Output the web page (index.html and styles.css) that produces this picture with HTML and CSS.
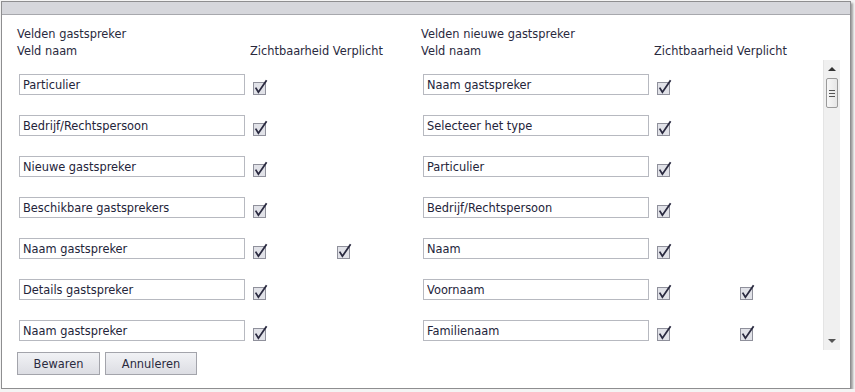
FILE: index.html
```html
<!DOCTYPE html>
<html lang="nl">
<head>
<meta charset="utf-8">
<title>Velden gastspreker</title>
<link rel="stylesheet" href="styles.css">
</head>
<body>
<div class="dialog">
  <div class="titlebar"></div>
  <div class="content">
    <div class="headers">
      <div class="col-head">
        <div class="h-title">Velden gastspreker</div>
        <div class="head-row"><span>Veld naam</span><span>Zichtbaarheid Verplicht</span></div>
      </div>
      <div class="col-head">
        <div class="h-title">Velden nieuwe gastspreker</div>
        <div class="head-row"><span>Veld naam</span><span>Zichtbaarheid Verplicht</span></div>
      </div>
    </div>
    <div class="scroll">
      <div class="scroll-inner">
        <div class="col">
          <div class="row"><input class="field" type="text" value="Particulier" readonly><svg class="cb" viewBox="0 0 15 16"><rect x="0.5" y="3.5" width="12" height="12"/><path d="M2.6 8.6 L5.4 13.2 L13.6 1.2"/></svg></div>
          <div class="row"><input class="field" type="text" value="Bedrijf/Rechtspersoon" readonly><svg class="cb" viewBox="0 0 15 16"><rect x="0.5" y="3.5" width="12" height="12"/><path d="M2.6 8.6 L5.4 13.2 L13.6 1.2"/></svg></div>
          <div class="row"><input class="field" type="text" value="Nieuwe gastspreker" readonly><svg class="cb" viewBox="0 0 15 16"><rect x="0.5" y="3.5" width="12" height="12"/><path d="M2.6 8.6 L5.4 13.2 L13.6 1.2"/></svg></div>
          <div class="row"><input class="field" type="text" value="Beschikbare gastsprekers" readonly><svg class="cb" viewBox="0 0 15 16"><rect x="0.5" y="3.5" width="12" height="12"/><path d="M2.6 8.6 L5.4 13.2 L13.6 1.2"/></svg></div>
          <div class="row"><input class="field" type="text" value="Naam gastspreker" readonly><svg class="cb" viewBox="0 0 15 16"><rect x="0.5" y="3.5" width="12" height="12"/><path d="M2.6 8.6 L5.4 13.2 L13.6 1.2"/></svg><svg class="cb req" viewBox="0 0 15 16"><rect x="0.5" y="3.5" width="12" height="12"/><path d="M2.6 8.6 L5.4 13.2 L13.6 1.2"/></svg></div>
          <div class="row"><input class="field" type="text" value="Details gastspreker" readonly><svg class="cb" viewBox="0 0 15 16"><rect x="0.5" y="3.5" width="12" height="12"/><path d="M2.6 8.6 L5.4 13.2 L13.6 1.2"/></svg></div>
          <div class="row"><input class="field" type="text" value="Naam gastspreker" readonly><svg class="cb" viewBox="0 0 15 16"><rect x="0.5" y="3.5" width="12" height="12"/><path d="M2.6 8.6 L5.4 13.2 L13.6 1.2"/></svg></div>
        </div>
        <div class="col">
          <div class="row"><input class="field" type="text" value="Naam gastspreker" readonly><svg class="cb" viewBox="0 0 15 16"><rect x="0.5" y="3.5" width="12" height="12"/><path d="M2.6 8.6 L5.4 13.2 L13.6 1.2"/></svg></div>
          <div class="row"><input class="field" type="text" value="Selecteer het type" readonly><svg class="cb" viewBox="0 0 15 16"><rect x="0.5" y="3.5" width="12" height="12"/><path d="M2.6 8.6 L5.4 13.2 L13.6 1.2"/></svg></div>
          <div class="row"><input class="field" type="text" value="Particulier" readonly><svg class="cb" viewBox="0 0 15 16"><rect x="0.5" y="3.5" width="12" height="12"/><path d="M2.6 8.6 L5.4 13.2 L13.6 1.2"/></svg></div>
          <div class="row"><input class="field" type="text" value="Bedrijf/Rechtspersoon" readonly><svg class="cb" viewBox="0 0 15 16"><rect x="0.5" y="3.5" width="12" height="12"/><path d="M2.6 8.6 L5.4 13.2 L13.6 1.2"/></svg></div>
          <div class="row"><input class="field" type="text" value="Naam" readonly><svg class="cb" viewBox="0 0 15 16"><rect x="0.5" y="3.5" width="12" height="12"/><path d="M2.6 8.6 L5.4 13.2 L13.6 1.2"/></svg></div>
          <div class="row"><input class="field" type="text" value="Voornaam" readonly><svg class="cb" viewBox="0 0 15 16"><rect x="0.5" y="3.5" width="12" height="12"/><path d="M2.6 8.6 L5.4 13.2 L13.6 1.2"/></svg><svg class="cb req req-r" viewBox="0 0 15 16"><rect x="0.5" y="3.5" width="12" height="12"/><path d="M2.6 8.6 L5.4 13.2 L13.6 1.2"/></svg></div>
          <div class="row"><input class="field" type="text" value="Familienaam" readonly><svg class="cb" viewBox="0 0 15 16"><rect x="0.5" y="3.5" width="12" height="12"/><path d="M2.6 8.6 L5.4 13.2 L13.6 1.2"/></svg><svg class="cb req req-r" viewBox="0 0 15 16"><rect x="0.5" y="3.5" width="12" height="12"/><path d="M2.6 8.6 L5.4 13.2 L13.6 1.2"/></svg></div>
        </div>
      </div>
      <div class="scrollbar">
        <div class="arrow up"></div>
        <div class="thumb"><span></span><span></span><span></span></div>
        <div class="track"></div>
        <div class="arrow down"></div>
      </div>
    </div>
    <div class="buttons">
      <button class="btn btn-save" type="button">Bewaren</button>
      <button class="btn btn-cancel" type="button">Annuleren</button>
    </div>
  </div>
</div>
</body>
</html>
```
FILE: styles.css
```css
html, body {
  margin: 0;
  padding: 0;
}
body {
  background: #f4f4f4;
  font-family: "DejaVu Sans", Verdana, sans-serif;
  font-size: 11.4px;
  color: #2a2a3e;
  overflow: hidden;
}
.dialog {
  box-sizing: border-box;
  margin: 1px 0 0 1px;
  width: 850px;
  height: 388px;
  background: #fff;
  border: 1px solid #8e8e90;
  box-shadow: 2px 2px 2px rgba(0, 0, 0, 0.35);
  display: flex;
  flex-direction: column;
}
.titlebar {
  height: 12px;
  background: #d6d7dc;
  border-bottom: 1px solid #a7a8ad;
  flex: none;
}
.content {
  padding: 11px 10px 0 15px;
  display: flex;
  flex-direction: column;
}
.headers {
  display: grid;
  grid-template-columns: 404px 1fr;
  line-height: 17px;
}
.head-row {
  display: grid;
  grid-template-columns: 233px auto;
}
.scroll {
  display: flex;
  height: 290px;
}
.scroll-inner {
  flex: 1;
  display: grid;
  grid-template-columns: 404px 1fr;
  align-content: start;
  padding-top: 14px;
  overflow: hidden;
}
.row {
  display: flex;
  align-items: flex-start;
  height: 21px;
  margin-bottom: 20px;
}
.field {
  box-sizing: border-box;
  margin: 0 0 0 2px;
  width: 226px;
  height: 21px;
  border: 1px solid #b7b9c0;
  padding: 0 3px;
  font-family: "DejaVu Sans", Verdana, sans-serif;
  font-size: 11.4px;
  color: #24243a;
  background: #fff;
  outline: none;
}
.cb {
  width: 15px;
  height: 16px;
  margin: 5px 0 0 8px;
  flex: none;
}
.cb rect {
  fill: #e1e2e8;
  stroke: #8f909b;
  stroke-width: 1;
}
.cb path {
  fill: none;
  stroke: #2a2a40;
  stroke-width: 1.8;
  stroke-linejoin: miter;
}
.cb.req {
  margin-left: 69px;
}
.cb.req-r {
  margin-left: 68px;
}
.scrollbar {
  width: 17px;
  flex: none;
  background: #f0f0f0;
  border-left: 1px solid #e4e4e4;
  box-sizing: border-box;
  display: flex;
  flex-direction: column;
  align-items: center;
}
.arrow {
  width: 0;
  height: 0;
  border-left: 4px solid transparent;
  border-right: 4px solid transparent;
  flex: none;
}
.arrow.up {
  border-bottom: 4px solid #333;
  margin-top: 7px;
}
.arrow.down {
  border-top: 4px solid #555;
  margin-bottom: 7px;
}
.thumb {
  box-sizing: border-box;
  margin-top: 7px;
  width: 12px;
  height: 30px;
  border: 1px solid #9a9a9a;
  border-radius: 2px;
  background: linear-gradient(to right, #f7f7f7, #e6e6e6);
  display: flex;
  flex-direction: column;
  align-items: center;
  justify-content: center;
  gap: 2px;
  flex: none;
}
.thumb span {
  display: block;
  width: 6px;
  height: 1px;
  background: #555;
}
.track {
  flex: 1;
}
.buttons {
  display: flex;
  gap: 5px;
  margin-top: 2px;
}
.btn {
  box-sizing: border-box;
  height: 23px;
  border: 1px solid #a3a4ab;
  background: linear-gradient(to bottom, #f1f2f5, #dcdde3);
  font-family: "DejaVu Sans", Verdana, sans-serif;
  font-size: 11.4px;
  color: #2a2a3e;
  padding: 0;
  margin: 0;
}
.btn-save {
  width: 83px;
}
.btn-cancel {
  width: 92px;
}
```
